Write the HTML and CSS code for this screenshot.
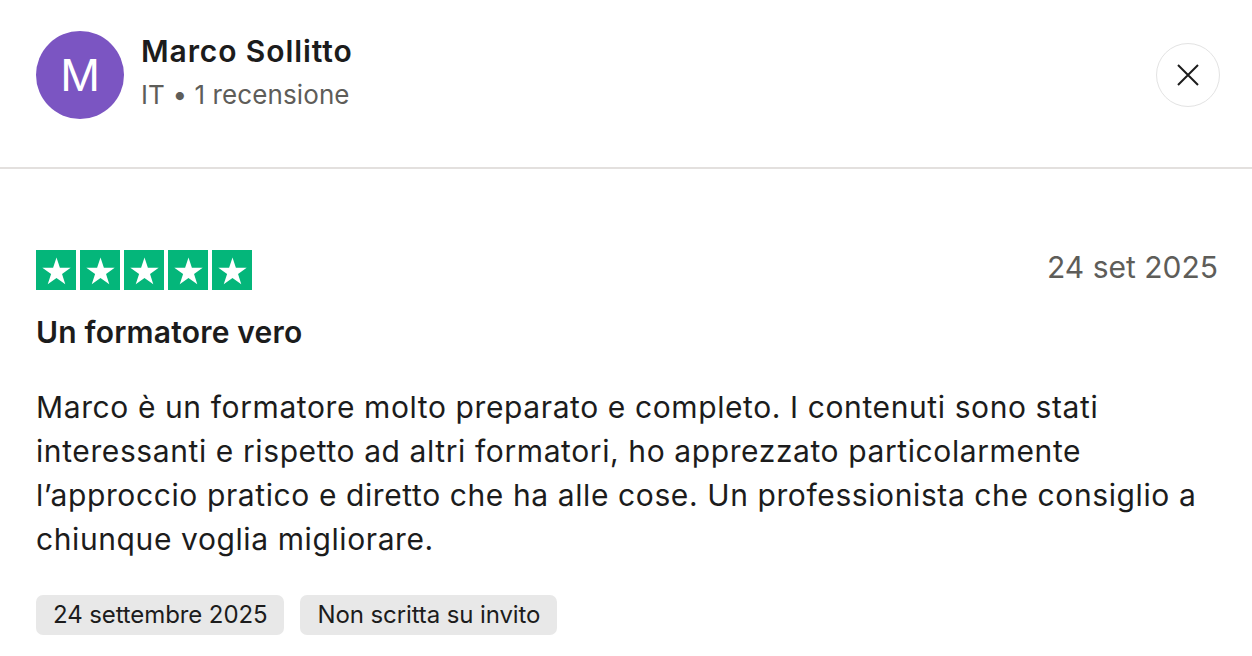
FILE: index.html
```html
<!DOCTYPE html>
<html lang="it">
<head>
<meta charset="utf-8">
<link rel="stylesheet" href="styles.css">
</head>
<body>
<div class="page">
  <header class="header">
    <div class="user">
      <div class="avatar">M</div>
      <div class="user-info">
        <div class="name">Marco Sollitto</div>
        <div class="meta">IT • 1 recensione</div>
      </div>
    </div>
    <button class="close" aria-label="Chiudi">
      <svg width="24" height="24" viewBox="0 0 24 24"><path d="M2 2 L22 22 M22 2 L2 22" stroke="#1c1c1c" stroke-width="2" fill="none"/></svg>
    </button>
  </header>
  <main class="review">
    <div class="review-top">
      <div class="stars">
        <span class="star"><svg viewBox="0 0 24 24"><path d="M12 3.6l2.2 6.6h7l-5.6 4.1 2.1 6.6L12 16.8l-5.7 4.1 2.2-6.6-5.7-4.1h7z" fill="#fff"/></svg></span>
        <span class="star"><svg viewBox="0 0 24 24"><path d="M12 3.6l2.2 6.6h7l-5.6 4.1 2.1 6.6L12 16.8l-5.7 4.1 2.2-6.6-5.7-4.1h7z" fill="#fff"/></svg></span>
        <span class="star"><svg viewBox="0 0 24 24"><path d="M12 3.6l2.2 6.6h7l-5.6 4.1 2.1 6.6L12 16.8l-5.7 4.1 2.2-6.6-5.7-4.1h7z" fill="#fff"/></svg></span>
        <span class="star"><svg viewBox="0 0 24 24"><path d="M12 3.6l2.2 6.6h7l-5.6 4.1 2.1 6.6L12 16.8l-5.7 4.1 2.2-6.6-5.7-4.1h7z" fill="#fff"/></svg></span>
        <span class="star"><svg viewBox="0 0 24 24"><path d="M12 3.6l2.2 6.6h7l-5.6 4.1 2.1 6.6L12 16.8l-5.7 4.1 2.2-6.6-5.7-4.1h7z" fill="#fff"/></svg></span>
      </div>
      <div class="date">24 set 2025</div>
    </div>
    <h2 class="title">Un formatore vero</h2>
    <p class="body">Marco è un formatore molto preparato e completo. I contenuti sono stati interessanti e rispetto ad altri formatori, ho apprezzato particolarmente l’approccio pratico e diretto che ha alle cose. Un professionista che consiglio a chiunque voglia migliorare.</p>
    <div class="tags">
      <span class="tag">24 settembre 2025</span>
      <span class="tag">Non scritta su invito</span>
    </div>
  </main>
</div>
</body>
</html>
```
FILE: styles.css
```css
* { box-sizing: border-box; }
html, body { margin: 0; padding: 0; background: #fff; }
body {
  font-family: Inter, "Liberation Sans", sans-serif;
  color: #1c1c1c;
  width: 1252px;
  height: 656px;
  overflow: hidden;
}
.header {
  display: flex;
  justify-content: space-between;
  align-items: flex-start;
  height: 169px;
  padding: 31px 32px 0 36px;
  border-bottom: 2px solid #e3e0de;
}
.user { display: flex; align-items: flex-start; gap: 17px; }
.avatar {
  width: 88px; height: 88px; border-radius: 50%;
  background: #7b55c2; color: #fff;
  display: flex; align-items: center; justify-content: center;
  font-size: 44px; font-weight: 400;
}
.user-info { display: flex; flex-direction: column; gap: 10px; padding-top: 2px; }
.name { font-size: 30px; font-weight: 600; line-height: 36px; letter-spacing: 0.9px; }
.meta { font-size: 26px; color: #5e5d59; line-height: 32px; letter-spacing: 0.1px; }
.close {
  width: 64px; height: 64px; border-radius: 50%;
  border: 1.5px solid #e3e3e3; background: #fff;
  display: flex; align-items: center; justify-content: center;
  padding: 0; margin-top: 12px;
}
.review { padding: 81px 34px 0 36px; }
.review-top { display: flex; justify-content: space-between; align-items: flex-start; }
.stars { display: flex; gap: 4px; }
.star {
  width: 40px; height: 40px; background: #04b67a;
  display: flex; align-items: center; justify-content: center;
}
.star svg { width: 37px; height: 37px; }
.date { font-size: 30px; line-height: 40px; color: #5e5d59; margin-top: -3px; }
.title { margin: 22px 0 0; font-size: 30px; font-weight: 600; line-height: 40px; letter-spacing: 0.2px; }
.body { margin: 33px 0 0; font-size: 30px; line-height: 44px; letter-spacing: 0.6px; }
.tags { display: flex; gap: 16px; margin-top: 34px; }
.tag {
  background: #e8e8e8; border-radius: 7px;
  font-size: 24px; line-height: 40px; padding: 0 17px;
  color: #1c1c1c; letter-spacing: -0.1px;
}
```
